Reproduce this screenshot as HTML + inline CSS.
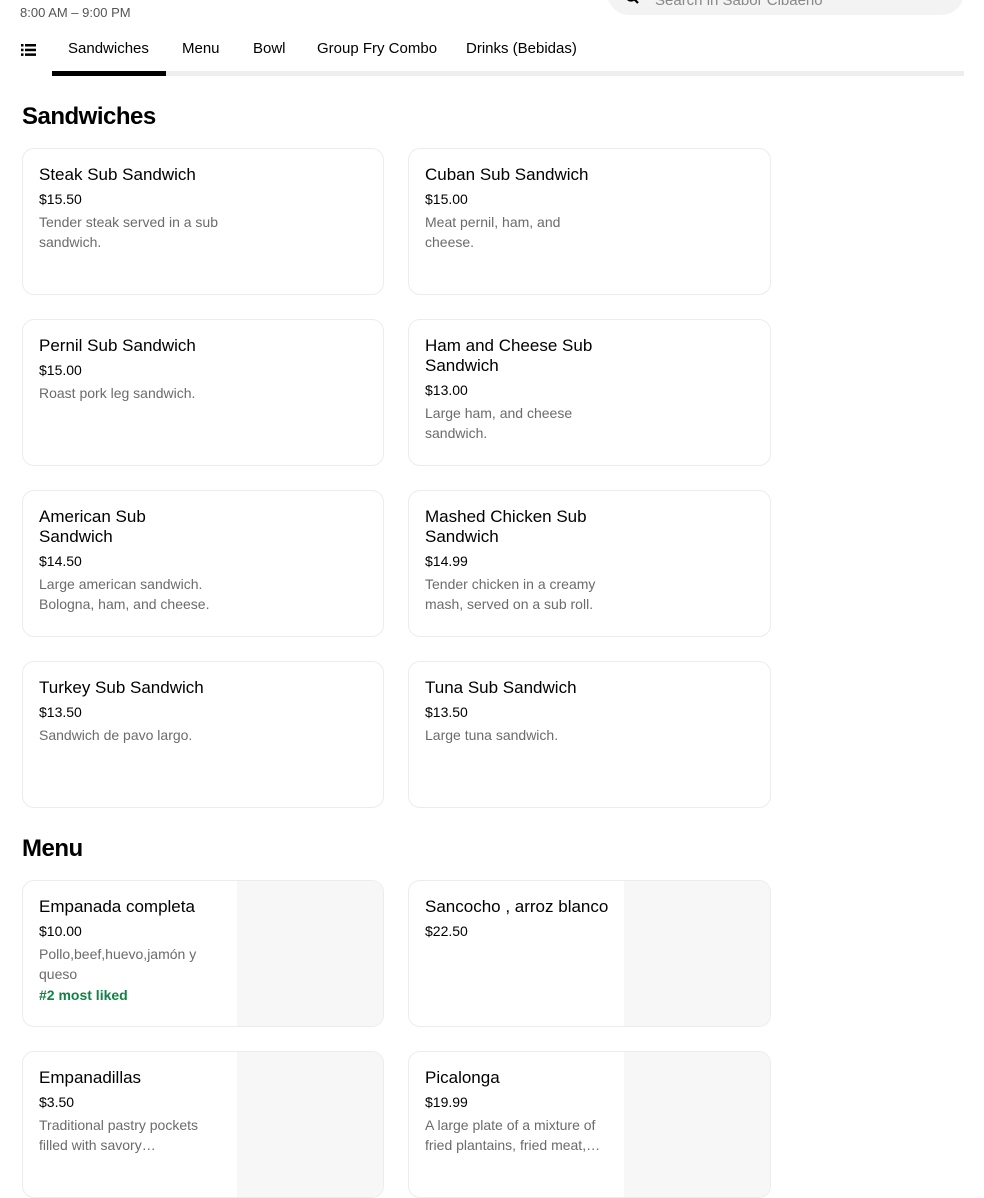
<!DOCTYPE html>
<html><head><meta charset="utf-8"><style>
*{box-sizing:border-box;margin:0;padding:0}
body{width:984px;height:1160px;overflow:hidden;background:#fff;font-family:"Liberation Sans",sans-serif;color:#000;position:relative}
.abs{position:absolute}
.hours{left:20px;top:5px;font-size:13px;color:#545454}
.search{left:607px;top:-30px;width:357px;height:45px;border-radius:23px;background:#f3f3f3}
.search span{position:absolute;left:48px;top:22px;font-size:15px;color:#888}
.tabs{top:40px;left:0;height:38px;width:984px}
.tab{position:absolute;top:0;font-size:15px;font-weight:500;}
.bar{left:52px;top:71px;width:912px;height:5px;background:#eee}
.barA{left:52px;top:71px;width:114px;height:5px;background:#000}
h2{position:absolute;left:22px;font-size:24px;font-weight:bold;letter-spacing:-0.5px}
.card{position:absolute;width:362px;height:147px;border:1px solid #ececec;border-radius:12px;overflow:hidden;background:#fff}
.card .in{position:absolute;left:16px;top:16px;width:190px}
.t{font-size:17px;font-weight:500;line-height:20px;color:#000}
.p{font-size:14px;line-height:20px;margin-top:4px}
.d{font-size:14px;line-height:20px;color:#6b6b6b;margin-top:3px;width:185px}
.g{font-size:14px;color:#0e8345;font-weight:bold;line-height:22px}
.img{position:absolute;right:0;top:0;width:146px;height:147px;background:#f7f7f7}
</style></head><body>
<div class="abs hours">8:00 AM – 9:00 PM</div>
<div class="abs search"><svg style="position:absolute;left:18px;top:20px" width="14" height="14" viewBox="0 0 14 14"><circle cx="6" cy="6" r="4.5" stroke="#000" stroke-width="2.2" fill="none"/><path d="M9 9l4 4" stroke="#000" stroke-width="2.2"/></svg><span>Search in Sabor Cibaeño</span></div>
<div class="abs tabs">
<svg style="position:absolute;left:21px;top:4px" width="15" height="12" viewBox="0 0 15 12"><rect x="0" y="0" width="2.5" height="2.5"/><rect x="4" y="0" width="11" height="2.5"/><rect x="0" y="4.7" width="2.5" height="2.5"/><rect x="4" y="4.7" width="11" height="2.5"/><rect x="0" y="9.4" width="2.5" height="2.5"/><rect x="4" y="9.4" width="11" height="2.5"/></svg>
<div class="tab" style="left:68px">Sandwiches</div>
<div class="tab" style="left:182px">Menu</div>
<div class="tab" style="left:253px">Bowl</div>
<div class="tab" style="left:317px">Group Fry Combo</div>
<div class="tab" style="left:466px">Drinks (Bebidas)</div>
</div>
<div class="abs bar"></div><div class="abs barA"></div>
<h2 style="top:103px">Sandwiches</h2>

<div class="card" style="left:22px;top:148px"><div class="in"><div class="t">Steak Sub Sandwich</div><div class="p">$15.50</div><div class="d">Tender steak served in a sub sandwich.</div></div></div>
<div class="card" style="left:408px;top:148px;width:363px"><div class="in"><div class="t">Cuban Sub Sandwich</div><div class="p">$15.00</div><div class="d" style="width:150px">Meat pernil, ham, and cheese.</div></div></div>
<div class="card" style="left:22px;top:319px"><div class="in"><div class="t">Pernil Sub Sandwich</div><div class="p">$15.00</div><div class="d">Roast pork leg sandwich.</div></div></div>
<div class="card" style="left:408px;top:319px;width:363px"><div class="in"><div class="t">Ham and Cheese Sub Sandwich</div><div class="p">$13.00</div><div class="d">Large ham, and cheese sandwich.</div></div></div>
<div class="card" style="left:22px;top:490px"><div class="in" style="width:150px"><div class="t">American Sub Sandwich</div></div><div class="in" style="top:60px"><div class="p" style="margin:0">$14.50</div><div class="d">Large american sandwich. Bologna, ham, and cheese.</div></div></div>
<div class="card" style="left:408px;top:490px;width:363px"><div class="in"><div class="t">Mashed Chicken Sub Sandwich</div><div class="p">$14.99</div><div class="d">Tender chicken in a creamy mash, served on a sub roll.</div></div></div>
<div class="card" style="left:22px;top:661px"><div class="in"><div class="t">Turkey Sub Sandwich</div><div class="p">$13.50</div><div class="d">Sandwich de pavo largo.</div></div></div>
<div class="card" style="left:408px;top:661px;width:363px"><div class="in"><div class="t">Tuna Sub Sandwich</div><div class="p">$13.50</div><div class="d">Large tuna sandwich.</div></div></div>

<h2 style="top:835px">Menu</h2>
<div class="card" style="left:22px;top:880px"><div class="img"></div><div class="in"><div class="t">Empanada completa</div><div class="p">$10.00</div><div class="d">Pollo,beef,huevo,jamón y queso</div><div class="g">#2 most liked</div></div></div>
<div class="card" style="left:408px;top:880px;width:363px"><div class="img"></div><div class="in" style="width:200px"><div class="t">Sancocho , arroz blanco</div><div class="p">$22.50</div></div></div>
<div class="card" style="left:22px;top:1051px"><div class="img"></div><div class="in"><div class="t">Empanadillas</div><div class="p">$3.50</div><div class="d">Traditional pastry pockets filled with savory…</div></div></div>
<div class="card" style="left:408px;top:1051px;width:363px"><div class="img"></div><div class="in"><div class="t">Picalonga</div><div class="p">$19.99</div><div class="d">A large plate of a mixture of fried plantains, fried meat,…</div></div></div>
</body></html>
